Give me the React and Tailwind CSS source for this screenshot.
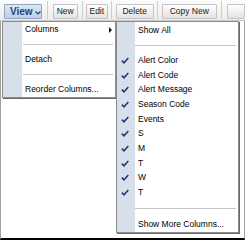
export default function App() {
  const cols = ["Alert Color", "Alert Code", "Alert Message", "Season Code", "Events", "S", "M", "T", "W", "T"];
  const Check = () => (
    <svg width="8" height="7" viewBox="0 0 8 7" className="block">
      <path d="M0.8 3.6 L3 5.8 L7.3 1" fill="none" stroke="#1d3a6c" strokeWidth="1.5" />
    </svg>
  );
  const Btn = ({ label, w, ml }) => (
    <div
      className={`${w} ${ml} h-[15px] flex items-center justify-center border border-[#c4c4c4] bg-gradient-to-b from-[#ffffff] to-[#e2e2e2] text-[#1a1a1a] text-[8.5px] rounded-[1px]`}
    >
      {label}
    </div>
  );
  const Sep = ({ ml }) => <div className={`${ml} w-px h-[18px] -mt-[3px] bg-[#cdcdcd]`} />;
  return (
    <div className="relative w-[245px] h-[240px] bg-white overflow-hidden font-['Liberation_Sans',Arial,sans-serif] text-[8.5px] text-black">
      <div className="h-[21px] flex items-start pt-[4px] bg-gradient-to-b from-[#fcfcfc] to-[#ececec] border-b border-[#c9c9c9]">
        <div className="ml-[4px] w-[38px] h-[15px] flex items-center pl-[5px] border border-[#8fa7c6] bg-gradient-to-b from-[#dbe6f3] to-[#bfcfe4] rounded-[1px]">
          <span className="text-[10px] font-bold text-[#1f4585] leading-none">View</span>
          <svg width="6" height="4" viewBox="0 0 6 4" className="ml-[2px] mt-[3px]">
            <path d="M0.5 0.5 L3 3 L5.5 0.5" fill="none" stroke="#1f4585" strokeWidth="1.2" />
          </svg>
        </div>
        <Sep ml="ml-[5px]" />
        <Btn label="New" w="w-[28px]" ml="ml-[5px]" />
        <Sep ml="ml-[4px]" />
        <Btn label="Edit" w="w-[24px]" ml="ml-[3px]" />
        <Sep ml="ml-[3px]" />
        <Btn label="Delete" w="w-[42px]" ml="ml-[4px]" />
        <Sep ml="ml-[3px]" />
        <Btn label="Copy New" w="w-[61px]" ml="ml-[4px]" />
        <Sep ml="ml-[4px]" />
        <Btn label="" w="w-[20px]" ml="ml-[5px]" />
      </div>
      <div className="h-[219px] border-l border-r border-[#a0a0a0] border-b-2 border-b-black" />

      {/* Main menu */}
      <div className="absolute left-[2px] top-[21px] w-[114px] bg-white border border-[#8c8c8c] shadow-[1px_1px_0_#6a6a6a] flex flex-col">
        <div className="h-[15px] flex">
          <div className="w-[19px] bg-[#d6dfea]" />
          <div className="flex-1 flex items-center justify-between pl-[3px] pr-[3px]">
            <span>Columns</span>
            <svg width="3" height="6" viewBox="0 0 3 6">
              <path d="M0 0 L3 3 L0 6 Z" fill="#111" />
            </svg>
          </div>
        </div>
        <div className="h-[15px] flex">
          <div className="w-[19px] bg-[#d6dfea]" />
          <div className="flex-1 flex items-center pl-[1px] pr-[2px]">
            <div className="h-px w-full bg-[#c6c6c6]" />
          </div>
        </div>
        <div className="h-[15px] flex">
          <div className="w-[19px] bg-[#d6dfea]" />
          <div className="flex-1 flex items-center pl-[3px]">Detach</div>
        </div>
        <div className="h-[15px] flex">
          <div className="w-[19px] bg-[#d6dfea]" />
          <div className="flex-1 flex items-center pl-[1px] pr-[2px]">
            <div className="h-px w-full bg-[#c6c6c6]" />
          </div>
        </div>
        <div className="h-[15px] flex">
          <div className="w-[19px] bg-[#d6dfea]" />
          <div className="flex-1 flex items-center pl-[3px]">Reorder Columns...</div>
        </div>
      </div>

      {/* Submenu */}
      <div className="absolute left-[116px] top-[21px] w-[123px] bg-white border border-[#8c8c8c] shadow-[1px_1px_0_#6a6a6a] flex flex-col">
        <div className="h-[16px] flex">
          <div className="w-[18px] bg-[#d6dfea]" />
          <div className="flex-1 flex items-center pl-[3px]">Show All</div>
        </div>
        <div className="h-[15px] flex">
          <div className="w-[18px] bg-[#d6dfea]" />
          <div className="flex-1 flex items-center pl-[0px] pr-[2px]">
            <div className="h-px w-full bg-[#c6c6c6]" />
          </div>
        </div>
        {cols.map((c, i) => (
          <div key={i} className="h-[14.7px] flex">
            <div className="w-[18px] bg-[#d6dfea] flex items-center pl-[4px]">
              <Check />
            </div>
            <div className="flex-1 flex items-center pl-[3px]">{c}</div>
          </div>
        ))}
        <div className="h-[17px] flex">
          <div className="w-[18px] bg-[#d6dfea]" />
          <div className="flex-1 flex items-center pl-[0px] pr-[2px]">
            <div className="h-px w-full bg-[#c6c6c6]" />
          </div>
        </div>
        <div className="h-[15px] flex">
          <div className="w-[18px] bg-[#d6dfea]" />
          <div className="flex-1 flex items-center pl-[3px]">Show More Columns...</div>
        </div>
      </div>
    </div>
  );
}
